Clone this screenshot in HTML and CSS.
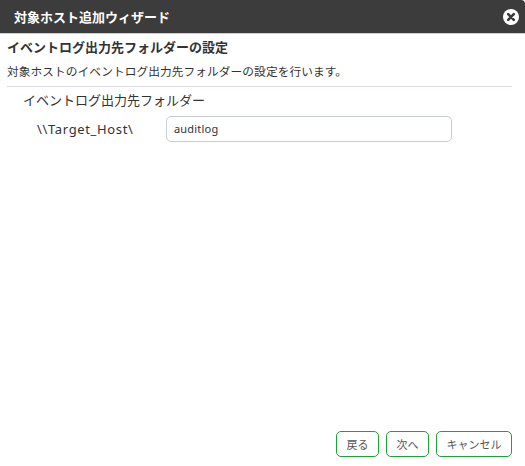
FILE: index.html
```html
<!DOCTYPE html>
<html lang="ja">
<head>
    <meta charset="UTF-8">
    <title>対象ホスト追加ウィザード</title>
    <link rel="stylesheet" href="styles.css">
</head>
<body>
    <div class="dialog">
        <div class="title-bar">
            <span class="title">対象ホスト追加ウィザード</span>
            <svg class="close-icon" width="16" height="16" viewBox="0 0 16 16">
                <circle cx="8" cy="8" r="8" fill="#fff"/>
                <path d="M5.2 5.2L10.8 10.8M10.8 5.2L5.2 10.8" stroke="#3c3c3c" stroke-width="2.6" stroke-linecap="round"/>
            </svg>
        </div>

        <div class="content">
            <h2>イベントログ出力先フォルダーの設定</h2>
            <p class="description">対象ホストのイベントログ出力先フォルダーの設定を行います。</p>

            <div class="section">
                <div class="section-label">イベントログ出力先フォルダー</div>
                <div class="field-row">
                    <label class="host-label">\\Target_Host\</label>
                    <div class="text-input">auditlog</div>
                </div>
            </div>
        </div>

        <div class="footer">
            <button class="btn btn-back">戻る</button>
            <button class="btn btn-next">次へ</button>
            <button class="btn btn-cancel">キャンセル</button>
        </div>
    </div>
</body>
</html>
```

FILE: styles.css
```css
* {
    box-sizing: border-box;
}

html, body {
    margin: 0;
    height: 100%;
}

body {
    font-family: "Noto Sans", "Noto Sans CJK JP", sans-serif;
    font-size: 12px;
    color: #333;
    background: #fff;
}

.dialog {
    display: flex;
    flex-direction: column;
    height: 466px;
}

.title-bar {
    display: flex;
    align-items: center;
    justify-content: space-between;
    height: 34px;
    padding: 0 6px 0 14px;
    background: #3c3c3c;
    border-bottom: 1px solid #ccc;
    border-top-right-radius: 4px;
}

.title {
    font-size: 13px;
    font-weight: 700;
    color: #fff;
}

.content {
    flex: 1;
    padding: 5px 13px 0 7px;
}

h2 {
    margin: 0;
    font-size: 13px;
    font-weight: 700;
    line-height: 17px;
    color: #333;
}

.description {
    margin: 7px 0 0;
    font-size: 11.7px;
    letter-spacing: 0.08px;
    line-height: 16px;
}

.section {
    margin-top: 7px;
    padding: 5px 0 0 16px;
    border-top: 1px solid #dcdce2;
}

.section-label {
    font-size: 13px;
    line-height: 17px;
}

.field-row {
    display: flex;
    align-items: center;
    margin-top: 7px;
}

.host-label {
    width: 143px;
    padding-left: 14px;
    font-size: 13px;
    letter-spacing: 0.65px;
}

.text-input {
    width: 286px;
    height: 26px;
    padding-left: 7px;
    border: 1px solid #c8ccd4;
    border-radius: 5px;
    font-size: 11px;
    letter-spacing: 0.2px;
    line-height: 24px;
}

.footer {
    display: flex;
    justify-content: flex-end;
    gap: 7px;
    padding: 0 13px 9px 0;
}

.btn {
    height: 26px;
    padding: 0;
    background: #fff;
    border: 1px solid #1fa038;
    border-radius: 5px;
    font-family: inherit;
    font-size: 11px;
    color: #555;
}

.btn-back, .btn-next {
    width: 43px;
}

.btn-cancel {
    width: 76px;
}
```
